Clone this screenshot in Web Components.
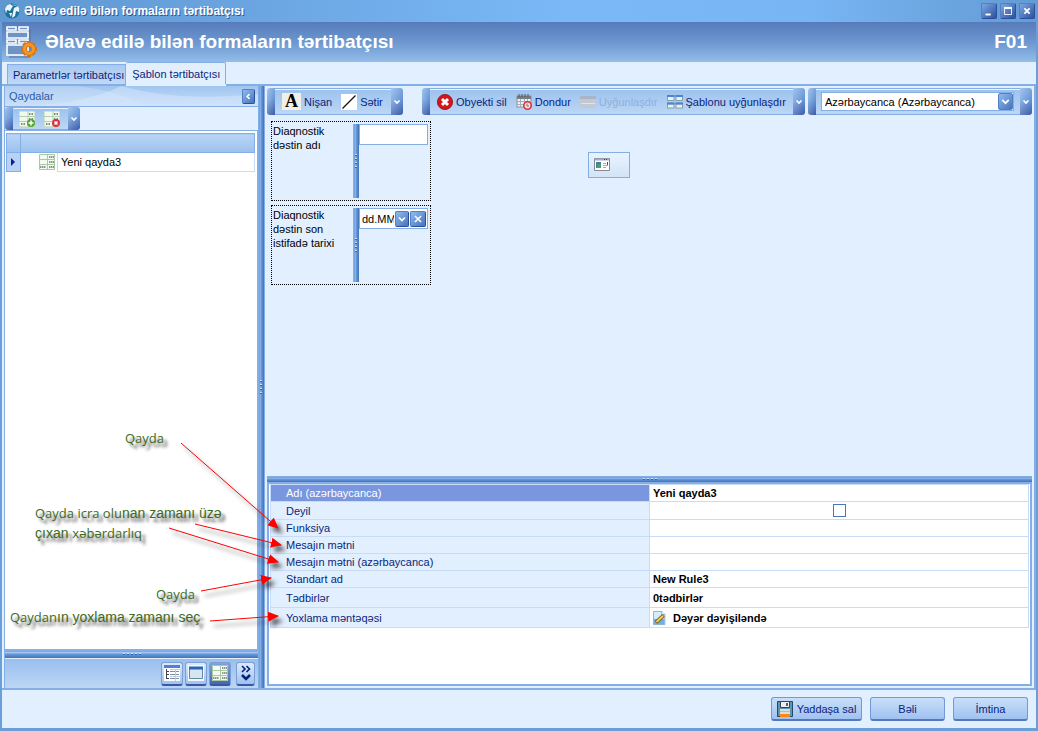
<!DOCTYPE html>
<html lang="az">
<head>
<meta charset="utf-8">
<title>Əlavə edilə bilən formaların tərtibatçısı</title>
<style>
  html, body { margin: 0; }
  body {
    font: 11px/14px "Liberation Sans", Arial, sans-serif;
    color: #0a1f7c;
    --line: #86aee6;
    --pane: #e1effe;
    --bar: linear-gradient(#9dc2ee, #bcd6f5);
    --cap: linear-gradient(90deg, rgba(255,255,255,.22), rgba(20,50,130,.12)), linear-gradient(#8ab5ea, #6c9ede 45%, #3e5fae);
    --btn: linear-gradient(135deg, #8fbcf0, #4673bd);
  }
</style>
</head>
<body>
<app-window></app-window>
<script>
const ICONS = {
  globe: '<circle cx="8" cy="8" r="7.5" fill="#1d6f9c"/><path d="M1 6Q2 2 6 1L9 3 6 8 3 7 2 11ZM10 5L14 3Q16 6 15 9L12 8 11 13 8 15 9 9ZM5 10L8 10 7 14Z" fill="#e8f6fc"/><path d="M8 1Q12 1 13 3L10 3Z" fill="#56b0d8"/>',
  add: '<rect width="16" height="16" fill="#f1f8ee"/><path d="M0 0H16V16H0ZM9 0V16M0 5.500H16M0 10.500H16" fill="none" stroke="#b3cfad"/><path d="M10 3H14M10 8H14M2 13H6" stroke="#7d8b7c" stroke-dasharray="1 .5" stroke-width="2"/><circle cx="12" cy="12" r="4" fill="#53a635"/><path d="M9.500 12H14.500M12 9.500V14.500" stroke="#fff" stroke-width="1.500"/>',
  del: '<rect width="16" height="16" fill="#f1f8ee"/><path d="M0 0H16V16H0ZM9 0V16M0 5.500H16M0 10.500H16" fill="none" stroke="#b3cfad"/><path d="M10 3H14M10 8H14M2 13H6" stroke="#7d8b7c" stroke-dasharray="1 .5" stroke-width="2"/><circle cx="12" cy="12" r="4" fill="#dc3040"/><path d="M10.500 10.500L13.500 13.500M13.500 10.500L10.500 13.500" stroke="#fff" stroke-width="1.500"/>',
  grid: '<rect width="16" height="16" fill="#f4faf1"/><path d="M.5 .5H15.500V15.500H.5ZM8.500 0V16M0 5.500H16M0 10.500H16" fill="none" stroke="#a9c9a4"/><path d="M10 3H15M10 8H15M10 13H15M1 13H7" stroke="#8d968c" stroke-dasharray="1.500 .5" stroke-width="2"/>',
  slash: '<rect width="16" height="16" fill="#fff"/><path d="M1.500 14.500L14.500 1.500" stroke="#111" stroke-width="1.200"/>',
  error: '<circle cx="8" cy="8" r="7.600" fill="#d3151e" stroke="#8d1017" stroke-width=".8"/><path d="M5 5L11 11M11 5L5 11" stroke="#fff" stroke-width="3"/>',
  freeze: '<rect x="1" y="2" width="14" height="11" fill="#eef2f7" stroke="#8b8f98"/><path d="M1 3.500H15" stroke="#777c86" stroke-width="3"/><path d="M3 0V3M6 0V3M9 0V3M12 0V3" stroke="#555"/><path d="M1 7.500H15M1 10.500H15M4.500 5V13M8.500 5V13M11.500 5V13" stroke="#a5acb8"/><circle cx="11.500" cy="11.500" r="3.700" fill="#f7dede" stroke="#d6353e" stroke-width="1.600"/><path d="M11 9.500V12H13" stroke="#777" fill="none"/>',
  fit: '<rect y="2" width="16" height="12" fill="#c3c9d3"/><path d="M0 3.500H16" stroke="#aab4c4" stroke-width="3"/><path d="M1 9.500H15" stroke="#e1e5ea"/>',
  tiles: '<path d="M0 1H7.500V7H0ZM8.500 1H16V7H8.500ZM0 8.500H7.500V14.500H0ZM8.500 8.500H16V14.500H8.500Z" fill="#83a3ab"/><path d="M1 3H6.500V6H1ZM9.500 3H15V6H9.500ZM1 10.500H6.500V13.500H1ZM9.500 10.500H15V13.500H9.500Z" fill="#e6f2f4"/><path d="M0 2H7.500M8.500 2H16M0 9.500H7.500M8.500 9.500H16" stroke="#4f82d6" stroke-width="2"/>',
  form: '<path d="M.5 1.500H15.500V13.500H.5Z" fill="#fff" stroke="#858b93"/><path d="M1 2.500H15" stroke="#a7adb5" stroke-width="2"/><path d="M10 2.500H14" stroke="#444" stroke-dasharray="1 1"/><path d="M2 5H7V11H2Z" fill="#3f7fae"/><path d="M4 7H7V11H2Z" fill="#4e9d69"/><path d="M9 6.500H12M9 8.500H14M9 10.500H12" stroke="#aaa"/><path d="M13.500 5V8" stroke="#35557d"/>',
  note: '<path d="M.5 .5H10L13.500 4V15.500H.5Z" fill="#d7ebfa" stroke="#78a9d4"/><path d="M1 9H13V15H1Z" fill="#6fb0e0"/><path d="M10 .5V4H13.500" fill="#fff" stroke="#78a9d4"/><path d="M3.500 13L12 5" stroke="#6b4c10" stroke-width="4"/><path d="M4 12.500L11.500 5.500" stroke="#f5d34c" stroke-width="2.400"/>',
  floppy: '<path d="M.5 .5H15.500V15.500H.5Z" fill="#5c97b5" stroke="#204a66"/><path d="M3.500 .5H12.500V6.500H3.500Z" fill="#eee" stroke="#345"/><path d="M10 2V5" stroke="#234" stroke-width="1.500"/><path d="M3 8H13V13H3Z" fill="#ddd"/><path d="M3 10.500H13" stroke="#bbb"/><path d="M3 13H13V16H3Z" fill="#f38a1b"/>',
  tree: '<path d="M0 0H16V16H0Z" fill="#fff"/><path d="M0 1.500H16" stroke="#4f7fd8" stroke-width="3"/><path d="M2.500 4V14M2 6.500H5M2 9.500H5M2 13.500H5" stroke="#445"/><path d="M6 6.500H11M6 9.500H11M6 13.500H11M12 6.500H15M12 9.500H15M12 13.500H15" stroke="#7f8ea6"/><path d="M11.500 4V16M6 4.500H16M6 11.500H16" stroke="#c0cbdd"/>',
  window: '<path d="M0 0H16V16H0Z" fill="#f4f8fc"/><path d="M1.500 3.500H14.500V13.500H1.500Z" fill="#d5e6ef" stroke="#6688a6"/><path d="M1 3H15" stroke="#2866b8" stroke-width="3"/>',
  marker: '<path d="M6 4L10 8 6 12Z" fill="#0a1f9c"/>',
  down: '<path d="M5.500 6.500L8 9 10.500 6.500" fill="none" stroke="#fff" stroke-width="1.600"/>',
  open: '<path d="M4 6L8 10 12 6" fill="none" stroke="#fff" stroke-width="2.200"/>',
  left: '<path d="M9.500 4.500L6 8 9.500 11.500" fill="none" stroke="#fff" stroke-width="2.200"/>',
  clear: '<path d="M4.500 4.500L11.500 11.500M11.500 4.500L4.500 11.500" stroke="#fff" stroke-width="1.800"/>',
  min: '<path d="M4 12H10" stroke="#fff" stroke-width="2.200"/>',
  max: '<path d="M4 4.500H12V12H4Z" fill="none" stroke="#fff"/><path d="M3.500 4.500H12.500" stroke="#fff" stroke-width="2.400"/>',
  close: '<path d="M5 5L11 11M11 5L5 11" stroke="#fff" stroke-width="2.200"/>',
  more: '<path d="M4 1L7 4 4 7M8.500 1L11.500 4 8.500 7" fill="none" stroke="#0a1f7c" stroke-width="1.600"/><path d="M4 10L8 14 12 10" fill="none" stroke="#0a1f7c" stroke-width="2.600"/>',
  designer: '<g transform="scale(.5)"><path d="M1 1H10V4H1ZM13 1H22V4H13ZM1 6H22V12H1ZM1 14H10V17H1ZM13 14H22V17H13ZM1 19H22V29H1Z" fill="#6f93c4" stroke="#fff" stroke-width="1.600"/><path d="M24 3V31H3" fill="none" stroke="#4f6f9d"/><circle cx="23" cy="23" r="4.500" fill="none" stroke="#d77511" stroke-width="4.500"/><path d="M23 15V18M23 28V31M15 23H18M28 23H31M17.500 17.500L19.500 19.500M26.500 26.500L28.500 28.500M28.500 17.500L26.500 19.500M17.500 28.500L19.500 26.500" stroke="#d77511" stroke-width="4"/><circle cx="23" cy="23" r="4.500" fill="none" stroke="#f2962c" stroke-width="3"/></g>'
};

function define(name, html, setup) {
  customElements.define(name, class extends HTMLElement {
    connectedCallback() {
      if (this.shadowRoot) return;
      const t = document.createElement('template');
      t.innerHTML = typeof html === 'function' ? html(this) : html;
      this.attachShadow({ mode: 'open' }).append(t.content.cloneNode(true));
      if (setup) setup(this);
    }
  });
}

define('ui-icon', el => `
  <style>:host{display:block;flex:none;width:16px;height:16px}svg{display:block;width:100%;height:100%}</style>
  <svg viewBox="0 0 16 16" aria-hidden="true">${ICONS[el.getAttribute('name')]}</svg>`);

/* Small square blue button with a white glyph */
define('glyph-button', el => `
  <style>
    :host{display:block;flex:none;width:16px;height:16px}
    button{display:block;width:100%;height:100%;margin:0;padding:0;border:1px solid #5180c5;border-bottom-color:#2b4e9b;border-right-color:#2b4e9b;border-radius:2px;background:var(--btn)}
    ui-icon{width:100%;height:100%}
  </style>
  <button type="button" aria-label="${el.getAttribute('label')}"><ui-icon name="${el.getAttribute('icon')}"></ui-icon></button>`);

define('title-bar', `
  <style>
    :host{display:flex;align-items:center;height:22px;padding:0 3px 0 4px;background:linear-gradient(90deg,#5f97d0,#6ba6e2 25%,#7ab8f7 55%,#78b5f4 78%,#639bd3)}
    .t{flex:1;margin-left:4px;font-size:12px;font-weight:bold;color:#fff;text-shadow:1px 1px #2e5592;white-space:nowrap}
    .b{display:flex;gap:3px}
    glyph-button{--btn:linear-gradient(135deg,#7ba8e0,#2d4f9f)}
  </style>
  <ui-icon name="globe"></ui-icon><span class="t"><slot></slot></span>
  <span class="b"><glyph-button icon="min" label="Kiçilt"></glyph-button><glyph-button icon="max" label="Böyüt"></glyph-button><glyph-button icon="close" label="Bağla"></glyph-button></span>`);

define('page-banner', `
  <style>
    :host{display:flex;align-items:center;height:40px;padding:0 9px 0 4px;background:linear-gradient(#567bbb,#6c97cf 50%,#93bde9);color:#fff}
    ui-icon{width:32px;height:32px}
    h1{flex:1;margin:0 0 0 7px;font-size:19px;line-height:24px;white-space:nowrap}
    b{font-size:19px;line-height:24px}
  </style>
  <ui-icon name="designer"></ui-icon><h1><slot></slot></h1><b><slot name="code"></slot></b>`);

define('tab-strip', `
  <style>
    :host{display:flex;align-items:flex-end;height:22px;padding-left:5px;background:var(--pane);border-bottom:2px solid var(--line)}
    button{box-sizing:border-box;height:20px;padding:0 1px 0 5px;margin:0;border:1px solid var(--line);border-bottom:0;background:linear-gradient(#a9caf1,#bfd8f6);font:inherit;color:inherit;white-space:nowrap}
    button[aria-selected=true]{height:22px;padding:0 5px 0 6px;border-left:0;border-radius:2px 2px 0 0;background:var(--pane);box-shadow:0 2px var(--pane)}
  </style>
  <button type="button" role="tab" aria-selected="false">Parametrlər tərtibatçısı</button><button type="button" role="tab" aria-selected="true">Şablon tərtibatçısı</button>`);

define('tool-bar', `
  <style>
    :host{display:flex;height:27px;flex:none}
    .g{width:8px;background:var(--cap);border-radius:3px 0 0 3px}
    .m{flex:1;display:flex;align-items:center;box-sizing:border-box;min-width:0;padding:var(--pad,0 8px 0 7px);gap:9px;background:var(--bar);border-top:1px solid var(--line);border-bottom:1px solid var(--line);box-shadow:inset 0 1px #eaf4ff}
    button{flex:none;width:12px;margin:0;padding:0;border:0;background:var(--cap);border-radius:0 3px 3px 0;overflow:hidden}
    ui-icon{margin-left:-2px}
  </style>
  <span class="g"></span><div class="m"><slot></slot></div><button type="button" aria-label="Alət seçimləri"><ui-icon name="down"></ui-icon></button>`);

define('tool-item', el => `
  <style>
    :host{display:block;flex:none}
    button{display:flex;align-items:center;gap:3px;margin:0;padding:0;border:0;background:none;font:inherit;color:inherit;white-space:nowrap}
    button:disabled{color:#8db0df}
    i{display:block;width:19px;height:17px;background:#f1efe6;color:#000;font:bold 18px/17px "Liberation Serif",serif;text-align:center}
  </style>
  <button type="button" ${el.hasAttribute('disabled') ? 'disabled' : ''} ${el.hasAttribute('label') ? `aria-label="${el.getAttribute('label')}"` : ''}>${el.hasAttribute('icon') ? `<ui-icon name="${el.getAttribute('icon')}"></ui-icon>` : '<i>A</i>'}<slot></slot></button>`);

define('split-bar', el => {
  const v = el.hasAttribute('vertical'), n = el.getAttribute('dots') || 4;
  return `
  <style>
    :host{display:flex;flex:none;align-items:center;justify-content:center;${v ? 'width' : 'height'}:var(--thick,6px);background:linear-gradient(${v ? '90deg' : '180deg'},#8ab3ea,#6fa1e0 30%,#a5cbf5 31%,#6b9cdc 50%,#4371b8)}
    span{display:flex;gap:2px;flex-direction:${v ? 'column' : 'row'}}
    i{width:2px;height:2px;background:linear-gradient(#cfe3fb 50%,#3562ab 50%)}
  </style><span>${'<i></i>'.repeat(n)}</span>`;
});

define('rules-panel', `
  <style>
    :host{display:flex;flex-direction:column;flex:none;width:254px;margin-left:2px;box-sizing:border-box;border-left:1px solid var(--line);background:var(--pane)}
    header{position:relative;display:flex;align-items:center;height:20px;padding:0 3px 0 4px;color:#2a5aa8;background:linear-gradient(#a1c5f0,#c6ddf8);border-bottom:1px solid var(--line)}
    header svg{position:absolute;inset:0;width:100%;height:100%}
    header span{flex:1;z-index:1}
    glyph-button{width:13px;height:15px;z-index:1}
    tool-bar{height:23px;width:75px;--pad:0 9px 0 6px}
    .list{flex:1;display:flex;flex-direction:column;padding:2px 2px 0 1px;border:1px solid var(--line);border-left-width:0;background:#fff}
    table{width:100%;border-collapse:collapse;table-layout:fixed;color:#000}
    th,td{height:18px;padding:0;font-weight:normal;text-align:left}
    th{background:linear-gradient(#b9d5f6,#9cc1ee);border:1px solid var(--line)}
    .h{background:#b6d2f5;border:1px solid var(--line);width:13px}
    .h ui-icon{margin-left:-2px}
    .i{width:36px}.i ui-icon{margin-left:18px}
    .n{padding-left:3px;border:1px solid #c9dcf5}
    nav{display:flex;align-items:center;justify-content:flex-end;height:29px;gap:2px;padding-right:3px;background:linear-gradient(#9abfee,#bcd6f5);border-top:1px solid #e4f0fd}
    nav button{display:flex;align-items:center;justify-content:center;box-sizing:border-box;width:22px;height:24px;padding:0;border:1px solid #7d9ed2;border-bottom:2px solid #3a59a5;border-radius:3px;background:linear-gradient(#dcebfc,#9dc2f0)}
    nav .on{background:linear-gradient(#7da5dc,#4368af)}
    nav .more{width:19px;margin-left:3px}
  </style>
  <header>
    <svg viewBox="0 0 250 20" preserveAspectRatio="none" aria-hidden="true"><path d="M70 0Q110 4 140 20H0V0Z" fill="#d3e5fa" opacity=".35"/><path d="M115 0Q170 16 250 8V20H0Q75 20 115 0Z" fill="#d8e8fb" opacity=".5"/></svg>
    <span>Qaydalar</span><glyph-button icon="left" label="Yığ"></glyph-button>
  </header>
  <tool-bar><tool-item icon="add" label="Əlavə et"></tool-item><tool-item icon="del" label="Sil"></tool-item></tool-bar>
  <div class="list"><table>
    <colgroup><col style="width:14px"><col style="width:37px"><col></colgroup>
    <thead><tr><th></th><th colspan="2"></th></tr></thead>
    <tbody><tr><td class="h"><ui-icon name="marker"></ui-icon></td><td class="i"><ui-icon name="grid"></ui-icon></td><td class="n">Yeni qayda3</td></tr></tbody>
  </table></div>
  <split-bar dots="5" style="--thick:8px"></split-bar>
  <nav>
    <button type="button" aria-label="Ağac"><ui-icon name="tree"></ui-icon></button>
    <button type="button" aria-label="Pəncərə"><ui-icon name="window"></ui-icon></button>
    <button type="button" class="on" aria-label="Qaydalar"><ui-icon name="grid"></ui-icon></button>
    <button type="button" class="more" aria-label="Daha çox"><ui-icon name="more"></ui-icon></button>
  </nav>`);

define('form-field', el => `
  <style>
    :host{display:flex;box-sizing:border-box;width:160px;height:80px;padding:2px 2px 2px 1px;border:1px dotted #000;color:#000}
    label{flex:1}
    split-bar{--thick:6px}
    .e{display:flex;align-items:center;box-sizing:border-box;width:69px;height:21px;padding:0 1px 0 0;gap:1px;border:1px solid var(--line);background:#fff}
    input{flex:1;min-width:0;width:0;height:17px;box-sizing:border-box;margin:0;padding:0 0 0 2px;border:0;outline:0;background:none;font:inherit;color:inherit}
    glyph-button:first-of-type{width:14px}
  </style>
  <label for="f"><slot></slot></label><split-bar vertical></split-bar>
  <div class="e"><input id="f" type="text" value="${el.getAttribute('value') || ''}">${el.hasAttribute('date') ? '<glyph-button icon="open" label="Təqvim"></glyph-button><glyph-button icon="clear" label="Təmizlə"></glyph-button>' : ''}</div>`);

define('language-picker', `
  <style>
    :host{position:relative;display:flex;flex:1;height:19px}
    select{flex:1;width:100%;margin:0;padding:0 20px 0 3px;appearance:none;border:1px solid var(--line);border-radius:0;background:#fff;font:inherit;color:#000}
    span{position:absolute;right:1px;top:1px;width:13px;height:15px;border:1px solid #5180c5;border-radius:2px;background:var(--btn);pointer-events:none}
    ui-icon{width:13px;height:15px}
  </style>
  <select aria-label="Dil"><option>Azərbaycanca (Azərbaycanca)</option></select><span><ui-icon name="open"></ui-icon></span>`);

define('property-grid', `
  <style>
    :host{display:block;flex:none;box-sizing:border-box;min-height:204px;padding:0 1px;border:2px solid var(--line);background:#fff}
    table{width:100%;border-collapse:collapse;table-layout:fixed;border:1px solid var(--line)}
    tr{height:17px}tr.t{height:20px}tr.m{height:18px}
    th,td{box-sizing:border-box;padding:0;border:1px solid #c9dcf5;line-height:14px;text-align:left}
    th{width:50%;padding-left:15px;background:var(--pane);font-weight:normal}
    td{padding-left:3px;color:#000;font-weight:bold}
    .s th{background:#7a96df;color:#fff}
    td.c{padding:0;text-align:center;line-height:0}
    input{appearance:none;width:13px;height:13px;box-sizing:border-box;margin:0;border:1px solid #4c74bb;background:#fff}
    .v{display:flex;align-items:center;gap:6px;height:16px}
    .v ui-icon{width:14px}
  </style>
  <table>
    <tr class="s"><th scope="row">Adı (azərbaycanca)</th><td>Yeni qayda3</td></tr>
    <tr class="m"><th scope="row"><label for="not">Deyil</label></th><td class="c"><input id="not" type="checkbox"></td></tr>
    <tr><th scope="row">Funksiya</th><td></td></tr>
    <tr><th scope="row">Mesajın mətni</th><td></td></tr>
    <tr><th scope="row">Mesajın mətni (azərbaycanca)</th><td></td></tr>
    <tr><th scope="row">Standart ad</th><td>New Rule3</td></tr>
    <tr class="t"><th scope="row">Tədbirlər</th><td>0tədbirlər</td></tr>
    <tr class="t"><th scope="row">Yoxlama məntəqəsi</th><td><span class="v"><ui-icon name="note"></ui-icon>Dəyər dəyişiləndə</span></td></tr>
  </table>`);

define('design-area', `
  <style>
    :host{display:flex;flex-direction:column;flex:1;min-width:0;box-sizing:border-box;padding:2px;border-left:1px solid var(--line);border-right:2px solid var(--line);background:var(--pane)}
    .bars{display:flex}
    .one{width:136px}.two{width:383px;margin-left:19px}.three{flex:1;margin-left:3px;--pad:0 6px 0 5px}
    .canvas{flex:1;display:flex;align-items:flex-start;padding:6px 0 0 4px}
    .fields{display:grid;gap:4px;padding-bottom:8px}
    .drop{display:flex;align-items:center;box-sizing:border-box;width:42px;height:26px;margin:31px 0 0 157px;padding:0 0 0 5px;border:1px solid var(--line);background:linear-gradient(#e8f3ff,#d3e4f6)}
  </style>
  <div class="bars">
    <tool-bar class="one"><tool-item>Nişan</tool-item><tool-item icon="slash">Sətir</tool-item></tool-bar>
    <tool-bar class="two"><tool-item icon="error">Obyekti sil</tool-item><tool-item icon="freeze">Dondur</tool-item><tool-item icon="fit" disabled>Uyğunlaşdır</tool-item><tool-item icon="tiles">Şablonu uyğunlaşdır</tool-item></tool-bar>
    <tool-bar class="three"><language-picker></language-picker></tool-bar>
  </div>
  <div class="canvas">
    <div class="fields"><form-field>Diaqnostik dəstin adı</form-field><form-field value="dd.MM.yyyy" date>Diaqnostik dəstin son istifadə tarixi</form-field></div>
    <button type="button" class="drop" aria-label="Forma"><ui-icon name="form"></ui-icon></button>
  </div>
  <split-bar></split-bar>
  <property-grid></property-grid>`);

define('action-bar', `
  <style>
    :host{display:flex;align-items:center;justify-content:flex-end;gap:8px;height:38px;padding-right:8px;background:var(--pane);border-top:2px solid var(--line)}
    button{display:flex;align-items:center;justify-content:center;gap:4px;box-sizing:border-box;width:75px;height:24px;margin:0;padding:0 3px;border:1px solid #7499d6;border-bottom:2px solid #5279bd;border-radius:3px;background:linear-gradient(#c9dffa,#9fc2f0);font:inherit;color:inherit;white-space:nowrap}
    .w{width:91px}
  </style>
  <button type="button" class="w"><ui-icon name="floppy"></ui-icon>Yaddaşa sal</button><button type="button">Bəli</button><button type="button">İmtina</button>`);

/* Callout texts and arrows floating over the window */
define('help-notes', `
  <style>
    :host{position:absolute;left:0;top:0;pointer-events:none;color:#3d6b1c;font-size:14px;line-height:20px}
    svg{position:absolute;left:0;top:0;overflow:visible;filter:drop-shadow(4px 5px 2px rgba(40,40,40,.7))}
    p{position:absolute;margin:0;white-space:nowrap;text-shadow:4px 4px 3px rgba(40,40,40,.75)}
    span{font-family:"Open Sans","Noto Sans",sans-serif;font-size:13px}
  </style>
  <svg width="300" height="640" aria-hidden="true">
    <defs><marker id="a" markerUnits="userSpaceOnUse" markerWidth="12" markerHeight="10" refX="10" refY="5" orient="auto"><path d="M0 0L11 5 0 10Z" fill="#f00"/></marker></defs>
    <g stroke="#f00" stroke-width="1"><path d="M181 443L278 528" marker-end="url(#a)"/><path d="M195 524L281 545" marker-end="url(#a)"/><path d="M169 528L278 562" marker-end="url(#a)"/><path d="M201 591L271 578" marker-end="url(#a)"/><path d="M210 621L278 616" marker-end="url(#a)"/></g>
  </svg>
  <p style="left:125px;top:428px"><span>Qayda</span></p>
  <p style="left:35px;top:503px"><span>Qayda icra olu</span>nan zamanı üzə<br>çıxan <span>xəbərdarlıq</span></p>
  <p style="left:156px;top:584px"><span>Qayda</span></p>
  <p style="left:10px;top:607px"><span>Qaydan</span>ın yoxlama zamanı seç</p>`);

define('app-window', `
  <style>
    :host{position:relative;display:flex;flex-direction:column;box-sizing:border-box;min-height:100vh;background:#6a9fd9}
    main{flex:1;display:flex;flex-direction:column;margin:0 2px 3px;background:var(--pane)}
    .work{flex:1;display:flex}
  </style>
  <title-bar>Əlavə edilə bilən formaların tərtibatçısı</title-bar>
  <main>
    <page-banner>Əlavə edilə bilən formaların tərtibatçısı<span slot="code">F01</span></page-banner>
    <tab-strip></tab-strip>
    <div class="work"><rules-panel></rules-panel><split-bar vertical></split-bar><design-area></design-area></div>
    <action-bar></action-bar>
  </main>
  <help-notes></help-notes>`);
</script>
</body>
</html>
